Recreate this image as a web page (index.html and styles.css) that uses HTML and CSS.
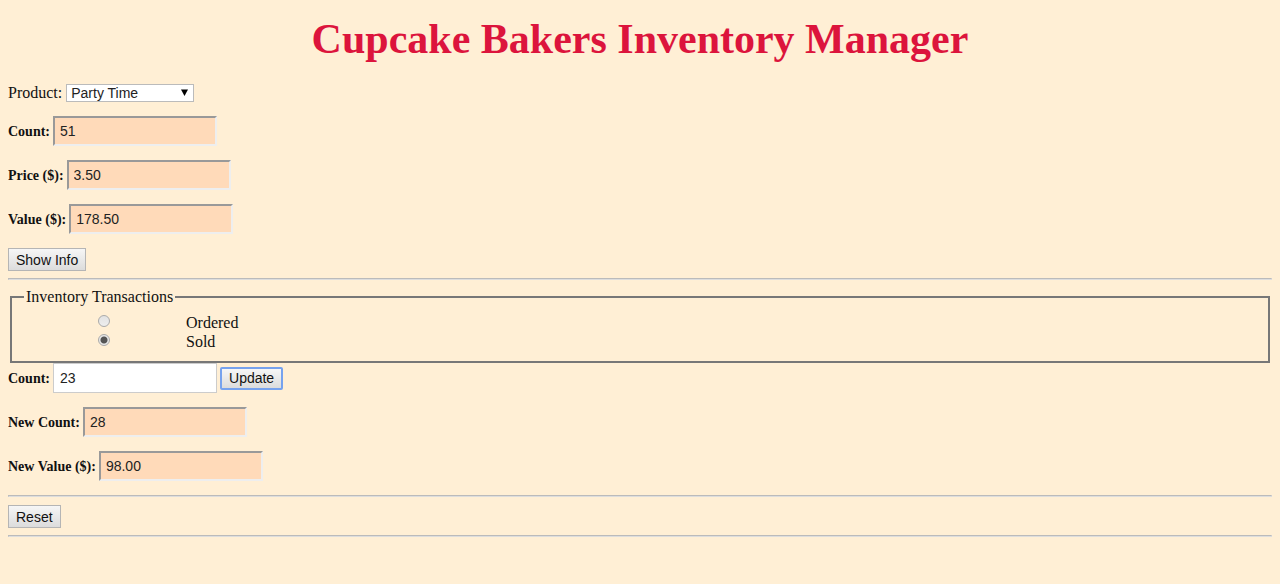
FILE: index.html
```html
<!DOCTYPE html>
<html lang="en">
<head>
<meta charset="utf-8">
<meta name="viewport" content="width=device-width, initial-scale=1">
<title>Cupcake Bakers Inventory Manager</title>
<link rel="stylesheet" href="styles.css">
</head>
<body class="page">
<h1 class="title">Cupcake Bakers Inventory Manager</h1>
<form class="form">
  <div class="row row-product">
    <label for="product">Product:</label>
    <span class="select-box">
      <select class="select" id="product"><option>Party Time</option></select>
      <svg class="arrow" viewBox="0 0 8 8" aria-hidden="true"><path d="M0 .5h8L4 8z"/></svg>
    </span>
  </div>
  <div class="row"><label class="label" for="count">Count:</label><input class="field result" id="count" type="text" value="51" readonly></div>
  <div class="row"><label class="label" for="price">Price ($):</label><input class="field result" id="price" type="text" value="3.50" readonly></div>
  <div class="row"><label class="label" for="value">Value ($):</label><input class="field result" id="value" type="text" value="178.50" readonly></div>
  <button class="button" type="button">Show Info</button>
  <hr class="rule">
  <fieldset class="group">
    <legend class="legend">Inventory Transactions</legend>
    <div class="option"><input class="radio" type="radio" name="kind" id="ordered"><label for="ordered">Ordered</label></div>
    <div class="option"><input class="radio" type="radio" name="kind" id="sold" checked><label for="sold">Sold</label></div>
  </fieldset>
  <div class="row"><label class="label" for="amount">Count:</label><input class="field" id="amount" type="text" value="23"><button class="button button-focus" type="button">Update</button></div>
  <div class="row"><label class="label" for="new-count">New Count:</label><input class="field result" id="new-count" type="text" value="28" readonly></div>
  <div class="row"><label class="label" for="new-value">New Value ($):</label><input class="field result" id="new-value" type="text" value="98.00" readonly></div>
  <hr class="rule">
  <button class="button" type="reset">Reset</button>
  <hr class="rule">
</form>
</body>
</html>
```
FILE: styles.css
```css
* {
  box-sizing: border-box;
}

.page {
  margin: 8px;
  background: #ffefd5;
  color: #111;
  font-family: "Liberation Serif", "Times New Roman", serif;
  font-size: 16px;
  line-height: 19px;
}

.title {
  margin: 0;
  padding: 7px 0 20px;
  color: #dc143c;
  font-family: Georgia, "Liberation Serif", serif;
  font-size: 42px;
  line-height: 48px;
  text-align: center;
}

.row {
  display: flex;
  align-items: center;
  gap: 3px;
  margin-bottom: 14px;
}

.row-product {
  gap: 4px;
}

.label {
  font-size: 14px;
  font-weight: bold;
}

.field {
  width: 164px;
  height: 30px;
  padding: 0 6px;
  border: 1px solid #ccc;
  background: #fff;
  color: #222;
  font-family: "Liberation Sans", Arial, sans-serif;
  font-size: 14px;
}

.result {
  border: 2px solid;
  border-color: #999 #eee #eee #999;
  padding: 0 5px;
  background: #ffdab9;
}

.select-box {
  display: grid;
  align-items: center;
}

.select {
  grid-area: 1 / 1;
  appearance: none;
  width: 128px;
  height: 18px;
  padding: 0 4px;
  border: 1px solid #bbb;
  border-radius: 0;
  background: #fff;
  color: #222;
  font-family: "Liberation Sans", Arial, sans-serif;
  font-size: 14px;
  line-height: 16px;
}

.arrow {
  grid-area: 1 / 1;
  justify-self: end;
  width: 7px;
  height: 7px;
  margin-right: 6px;
  pointer-events: none;
}

.button {
  display: block;
  height: 23px;
  padding: 0 7px;
  border: 1px solid #b5b5b5;
  border-radius: 0;
  background: linear-gradient(#f6f6f6, #dcdcdc);
  color: #111;
  font-family: "Liberation Sans", Arial, sans-serif;
  font-size: 14px;
}

.button-focus {
  border: 2px solid #76a2ee;
  border-radius: 2px;
}

.rule {
  margin: 7px 0 8px;
  border: 1px solid;
  border-color: #bbb #ddd #ddd #bbb;
}

.group {
  margin: 0 2px;
  padding: 7px 12px 10px;
  border: 2px solid #777;
}

.legend {
  padding: 0 2px;
  line-height: 18px;
}

.option {
  display: flex;
  align-items: center;
}

.radio {
  appearance: none;
  width: 12px;
  height: 12px;
  margin: 0 76px 4px 74px;
  border: 1px solid #aaa;
  border-radius: 50%;
  background: linear-gradient(#e2e2e2, #eee);
}

.radio:checked {
  background: radial-gradient(circle, #555 0 3px, #e8e8e8 4px);
}
```
